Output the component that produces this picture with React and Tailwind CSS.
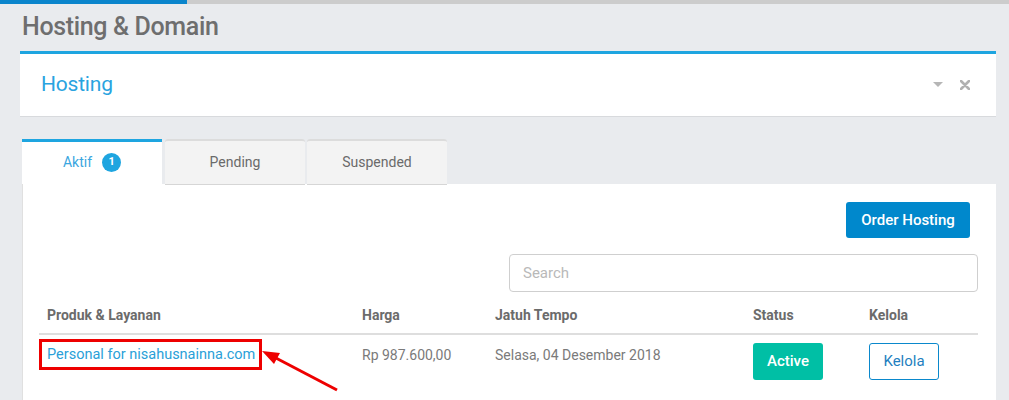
export default function App() {
  return (
    <div className="relative min-h-[400px] w-[1009px] overflow-hidden bg-[#e9ebee] font-['Roboto',sans-serif]">
      <div className="flex h-[4px]">
        <div className="w-[187px] bg-[#0a85cc]" />
        <div className="flex-1 bg-[#cccccc]" />
      </div>

      <h1 className="pl-[22px] pt-[6px] text-[25px] font-medium leading-[34px] tracking-[-0.35px] text-[#6e6e6e]">
        Hosting &amp; Domain
      </h1>

      <div className="ml-[20px] mr-[13px] mt-[7px]">
        <div className="flex h-[65px] items-center border-t-[3px] border-[#1ea5e0] bg-white pl-[21px] pr-[26px] shadow-[0_1px_0_#d8dadd]">
          <span className="text-[21px] tracking-[-0.2px] text-[#29a3df]">Hosting</span>
          <div className="ml-auto flex items-center gap-[17px]">
            <svg width="10" height="6" viewBox="0 0 10 6"><path d="M0 0h10L5 5z" fill="#b6b6b6" /></svg>
            <svg width="10" height="10" viewBox="0 0 10 10">
              <path d="M1 1L9 9M9 1L1 9" stroke="#b0b0b0" strokeWidth="2.6" strokeLinecap="round" />
            </svg>
          </div>
        </div>

        <div className="mt-[23px] flex pl-[2px]">
          <Tab active>
            Aktif
            <span className="ml-[10px] flex h-[19px] w-[19px] items-center justify-center rounded-full bg-[#1ea5e0] text-[11px] font-bold text-white">1</span>
          </Tab>
          <Tab>Pending</Tab>
          <Tab>Suspended</Tab>
        </div>

        <div className="ml-[2px] border-l border-[#e0e0e0] bg-white pb-[40px] pl-[16px] pr-[18px] pt-[18px]">
          <div className="flex justify-end pr-[8px]">
            <button className="h-[36px] w-[124px] rounded-[3px] bg-[#0088cc] text-[15px] font-medium text-white">
              Order Hosting
            </button>
          </div>
          <div className="mt-[16px] flex justify-end">
            <input
              placeholder="Search"
              className="h-[38px] w-[469px] rounded-[4px] border border-[#cfcfcf] px-[13px] text-[15px] outline-none placeholder:text-[#b9b9b9]"
            />
          </div>

          <table className="mt-[4px] w-full table-fixed text-left text-[14px]">
            <colgroup>
              <col className="w-[315px]" />
              <col className="w-[133px]" />
              <col className="w-[258px]" />
              <col className="w-[116px]" />
              <col />
            </colgroup>
            <thead>
              <tr className="border-b-2 border-[#dedede] text-[#6b6b6b]">
                <th className="h-[38px] pl-[8px] pt-[2px] font-bold">Produk &amp; Layanan</th>
                <th className="pl-[8px] pt-[2px] font-bold">Harga</th>
                <th className="pl-[8px] pt-[2px] font-bold">Jatuh Tempo</th>
                <th className="pl-[8px] pt-[2px] font-bold">Status</th>
                <th className="pl-[8px] pt-[2px] font-bold">Kelola</th>
              </tr>
            </thead>
            <tbody>
              <tr className="align-top text-[#7a7a7a]">
                <td className="pt-[4px]">
                  <div className="inline-block h-[31px] w-[223px] border-[3px] border-[#ee0000] pl-[5px] pt-[2px] text-[14.5px] text-[#2a9fd8]">
                    Personal for nisahusnainna.com
                  </div>
                </td>
                <td className="pl-[8px] pt-[10px]">Rp 987.600,00</td>
                <td className="pl-[8px] pt-[10px]">Selasa, 04 Desember 2018</td>
                <td className="pl-[8px] pt-[8px]">
                  <span className="flex h-[37px] w-[70px] items-center justify-center rounded-[3px] bg-[#00bfa5] text-[15px] font-medium text-white">
                    Active
                  </span>
                </td>
                <td className="pl-[8px] pt-[8px]">
                  <span className="flex h-[37px] w-[70px] items-center justify-center rounded-[3px] border border-[#0a88cc] text-[15px] text-[#1f7fc0]">
                    Kelola
                  </span>
                </td>
              </tr>
            </tbody>
          </table>
        </div>
      </div>

      <svg className="absolute left-0 top-0" width="1009" height="400" viewBox="0 0 1009 400">
        <line x1="337" y1="390" x2="274" y2="357" stroke="#ee0000" strokeWidth="3" />
        <path d="M262 351 L280 353 L274 364 Z" fill="#ee0000" />
      </svg>
    </div>
  );
}

function Tab({ active, children }) {
  return (
    <div
      className={
        active
          ? "mr-[3px] flex h-[45px] w-[140px] items-center justify-center border-t-[3px] border-[#1ea5e0] bg-white pb-[2px] text-[14px] text-[#3aa6e0]"
          : "mr-[2px] flex h-[45px] w-[140px] items-center justify-center rounded-t-[3px] border-t-[2px] border-[#dcdcdc] bg-[#f3f3f3] text-[14px] text-[#6a6a6a] shadow-[0_1px_0_#d6d6d6]"
      }
    >
      {children}
    </div>
  );
}
